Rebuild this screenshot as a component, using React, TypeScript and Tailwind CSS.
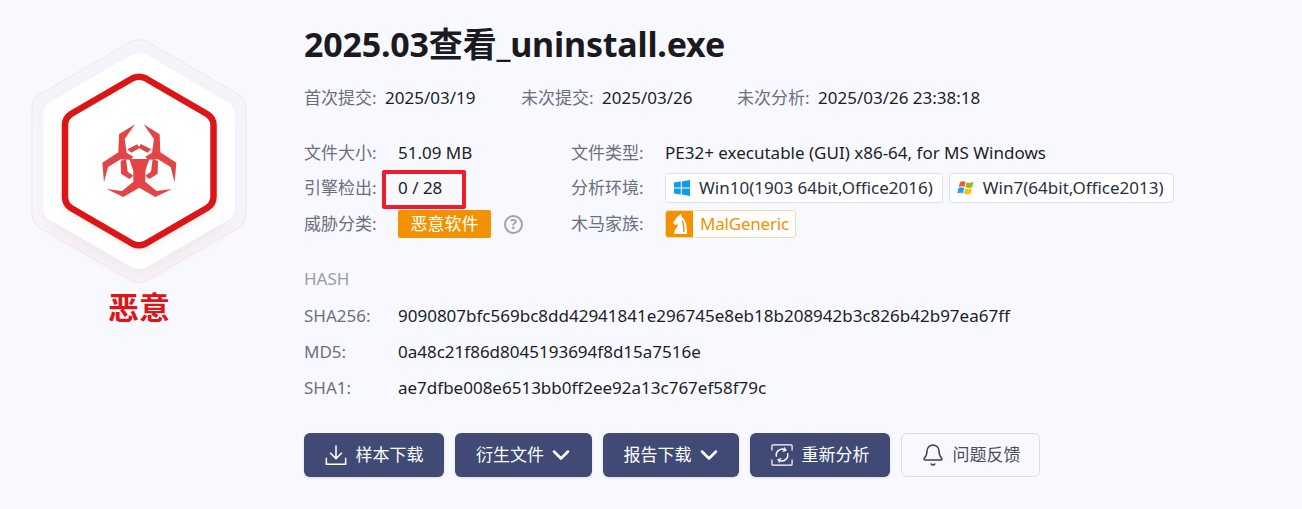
import React from "react";
import { ChevronDown, Bell } from "lucide-react";

const label = "text-[#6b6f80]";

function Hexagon() {
  return (
    <svg width="278" height="290" viewBox="0 0 278 290" className="block">
      <defs>
        <filter id="glow" x="-30%" y="-30%" width="160%" height="160%">
          <feGaussianBlur stdDeviation="10" />
        </filter>
        <filter id="soft" x="-30%" y="-30%" width="160%" height="160%">
          <feGaussianBlur stdDeviation="6" />
        </filter>
      </defs>
      {/* outer thin outline */}
      <path d="M131 41.500 Q139 38 147 41.500 L238 94 Q246 99 246 108 L246 214 Q246 223 238 228 L147 280.500 Q139 284 131 280.500 L40 228 Q32 223 32 214 L32 108 Q32 99 40 94 Z" fill="#f6f5fc" stroke="#fde3e0" strokeWidth="1" />
      <path d="M139 60 L228 110 L228 226 L139 276 L50 226 L50 110 Z" fill="#e9c6cf" opacity="0.35" filter="url(#glow)" />
      {/* white plate */}
      <path d="M132 54.500 Q139 52 146 54.500 L228 102 Q235 106 235 114 L235 208 Q235 216 228 220 L146 267.500 Q139 270 132 267.500 L50 220 Q43 216 43 208 L43 114 Q43 106 50 102 Z" fill="#ffffff" />
      <path d="M139 82 L212 122 L212 206 L139 248 L66 206 L66 122 Z" fill="#f2a5a5" opacity="0.55" filter="url(#soft)" />
      {/* red hexagon */}
      <path d="M133 78 Q139 75.500 145 78 L207 114 Q213.500 118 213.500 125 L213.500 197 Q213.500 204 207 208 L145 244 Q139 246.500 133 244 L71 208 Q65 204 65 197 L65 125 Q65 118 71 114 Z" fill="#ffffff" stroke="#dc1616" strokeWidth="6.500" strokeLinejoin="round" />
      {/* biohazard */}
      <g transform="translate(90 115) scale(0.3333)" fill="#e34445">
        <path d="M135 28 L87 58 L85 112 L37 143 L42 202 L54 156 L92 133 L122 134 L130 125 L110 113 L104 72 Z" />
        <path d="M135 28 L87 58 L85 112 L37 143 L42 202 L54 156 L92 133 L122 134 L130 125 L110 113 L104 72 Z" transform="matrix(-1 0 0 1 296 0)" />
        <path d="M112 103 L148 85 L184 103 L172 113 L148 100 L124 113 Z" />
        <path d="M92 138 L108 131 L113 170 L130 182 L118 192 L93 176 Z" />
        <path d="M204 138 L188 131 L183 170 L166 182 L178 192 L203 176 Z" />
        <path d="M118 132 L178 132 L166 168 L166 200 L200 228 L246 222 L196 246 L148 218 L100 246 L50 222 L96 228 L130 200 L130 168 Z" />
      </g>
      <path d="M132 135 L146 135 L139 147 Z" fill="#ffffff" />
    </svg>
  );
}

function DownloadIcon() {
  return (
    <svg width="22" height="22" viewBox="0 0 24 24" fill="none" stroke="#ffffff" strokeWidth="1.700">
      <path d="M12 1.500 V16 M5.500 9.500 L12 16 L18.500 9.500" />
      <path d="M1.500 15 V22 H22.500 V15" />
    </svg>
  );
}

function ReanalyzeIcon() {
  return (
    <svg width="22" height="22" viewBox="0 0 24 24" fill="none" stroke="#ffffff" strokeWidth="1.300">
      <path d="M1 7 V2 Q1 1 2 1 H22 Q23 1 23 2 V7 M1 17 V22 Q1 23 2 23 H22 Q23 23 23 22 V17" />
      <path d="M6 14 A6.500 6.500 0 0 1 15.500 6.500 M18 10 A6.500 6.500 0 0 1 8.500 17.500" strokeWidth="1.600" />
      <path d="M14.500 3.800 L16.300 7 L12.800 8 M9.500 20.200 L7.700 17 L11.200 16" />
    </svg>
  );
}

function Win10Icon() {
  return (
    <svg width="18" height="16" viewBox="0 0 18 16" fill="#0f9bea">
      <path d="M1 2.500 L7.800 1.500 V7.500 H1 Z M8.800 1.400 L17 0 V7.500 H8.800 Z M1 8.500 H7.800 V14.500 L1 13.500 Z M8.800 8.500 H17 V16 L8.800 14.600 Z" />
    </svg>
  );
}

function Win7Icon() {
  return (
    <svg width="18" height="16" viewBox="0 0 18 16">
      <path d="M3 2 Q6 0.500 8.500 2 L7.400 7 Q5 5.600 1.800 7 Z" fill="#f0592b" />
      <path d="M9.500 2.300 Q13 4 16.500 1.500 L15.300 7 Q12 9 8.400 7.300 Z" fill="#8fbd1d" />
      <path d="M1.500 8 Q4.500 6.700 7.200 8 L6 13.500 Q3.300 12 0.200 13.500 Z" fill="#1ea3ea" />
      <path d="M8.200 8.300 Q11.500 10 15 8 L13.800 13.500 Q10.500 15.500 7 13.800 Z" fill="#f8c018" />
    </svg>
  );
}

function KnightIcon() {
  return (
    <svg width="16" height="20" viewBox="0 0 16 20" fill="#ffffff">
      <path d="M9 0 L10 3 Q15 7 15 18 L15 20 H2 Q2 16 5 13 L6 10 L3 11 L1 9 L5 3 Z" />
      <path d="M10.500 6 Q13 10 12.500 18 L11 18 Q11.500 11 9.500 7 Z" fill="#f39200" />
    </svg>
  );
}

function ActionButton({ icon, text, chevron, width }: { icon?: React.ReactNode; text: string; chevron?: boolean; width: string }) {
  return (
    <button className={`flex h-[44px] items-center justify-center rounded-md bg-[#404a75] text-white shadow-sm ${chevron ? "gap-[3px] pl-[4px]" : "gap-[9px]"} ${width}`}>
      {icon}
      <span>{text}</span>
      {chevron && <ChevronDown className="h-[28px] w-[28px]" strokeWidth={2.2} />}
    </button>
  );
}

function EnvTag({ icon, text }: { icon: React.ReactNode; text: string }) {
  return (
    <span className="flex h-[30px] items-center gap-[8px] rounded-[3px] border border-[#dfe1ea] bg-white pl-[7px] pr-[9px] text-[#2b2f3d]">
      {icon}
      {text}
    </span>
  );
}

export default function App() {
  return (
    <div
      className="flex h-[509px] w-[1302px] overflow-hidden bg-[#f8f9ff] text-[17px]/[24px] text-[#1b1d26]"
      style={{ fontFamily: '"Noto Sans", "Noto Sans CJK SC", sans-serif' }}
    >
      {/* verdict column */}
      <div className="flex w-[278px] shrink-0 flex-col items-center">
        <Hexagon />
        <div className="mt-[-1px] text-[31px] font-bold leading-[36px] text-[#dc1616]">恶意</div>
      </div>

      <div className="ml-[26px] flex-1 pt-[20px]">
        <h1 className="text-[34px] font-bold leading-[48px] tracking-[-0.2px] text-[#1a1a1f]">2025.03查看_uninstall.exe</h1>

        <div className="mt-[18px] flex h-[24px] items-center">
          <span className={`${label} w-[81px]`}>首次提交:</span>
          <span className="w-[136px]">2025/03/19</span>
          <span className={`${label} w-[81px]`}>未次提交:</span>
          <span className="w-[135px]">2025/03/26</span>
          <span className={`${label} w-[81px]`}>未次分析:</span>
          <span>2025/03/26 23:38:18</span>
        </div>

        <div className="mt-[25px] grid grid-cols-[94px_173px_94px_1fr] grid-rows-[36px_34px_38px] items-center">
          <span className={label}>文件大小:</span>
          <span>51.09 MB</span>
          <span className={label}>文件类型:</span>
          <span>PE32+ executable (GUI) x86-64, for MS Windows</span>

          <span className={label}>引擎检出:</span>
          <span className="relative">
            0 / 28
            <span className="absolute left-[-16px] top-[-6px] h-[39px] w-[84px] rounded-[2px] border-[4px] border-[#ee1c2e]" />
          </span>
          <span className={label}>分析环境:</span>
          <div className="flex gap-[6px]">
            <EnvTag icon={<Win10Icon />} text="Win10(1903 64bit,Office2016)" />
            <EnvTag icon={<Win7Icon />} text="Win7(64bit,Office2013)" />
          </div>

          <span className={label}>威胁分类:</span>
          <div className="flex items-center gap-[13px]">
            <span className="flex h-[28px] w-[93px] items-center justify-center rounded-[2px] bg-[#f39200] text-white">恶意软件</span>
            <span className="flex h-[19px] w-[19px] items-center justify-center rounded-full border-2 border-[#a3a3a8] text-[14px] font-bold text-[#a3a3a8]">?</span>
          </div>
          <span className={label}>木马家族:</span>
          <div className="flex h-[28px] w-fit items-stretch overflow-hidden rounded-[3px] border border-[#fbd9a8]">
            <span className="flex w-[27px] items-center justify-center bg-[#f39200]">
              <KnightIcon />
            </span>
            <span className="flex items-center bg-white pl-[7px] pr-[6px] tracking-[-0.2px] text-[#f39200]">MalGeneric</span>
          </div>
        </div>

        <div className="mt-[24px] flex h-[24px] items-center text-[#9a9ca8]">HASH</div>
        <div className="mt-[7px] grid grid-cols-[94px_1fr] grid-rows-[36px_36px_36px] items-center">
          <span className={label}>SHA256:</span>
          <span>9090807bfc569bc8dd42941841e296745e8eb18b208942b3c826b42b97ea67ff</span>
          <span className={label}>MD5:</span>
          <span>0a48c21f86d8045193694f8d15a7516e</span>
          <span className={label}>SHA1:</span>
          <span>ae7dfbe008e6513bb0ff2ee92a13c767ef58f79c</span>
        </div>

        <div className="mt-[27px] flex gap-[11px]">
          <ActionButton width="w-[140px]" icon={<DownloadIcon />} text="样本下载" />
          <ActionButton width="w-[137px]" text="衍生文件" chevron />
          <ActionButton width="w-[136px]" text="报告下载" chevron />
          <ActionButton width="w-[140px]" icon={<ReanalyzeIcon />} text="重新分析" />
          <button className="flex h-[44px] w-[139px] items-center justify-center gap-[8px] rounded-md border border-[#dcdde8] text-[#4a4d5e]">
            <Bell className="h-[24px] w-[24px] text-[#3d4155]" strokeWidth={1.5} />
            问题反馈
          </button>
        </div>
      </div>
    </div>
  );
}
